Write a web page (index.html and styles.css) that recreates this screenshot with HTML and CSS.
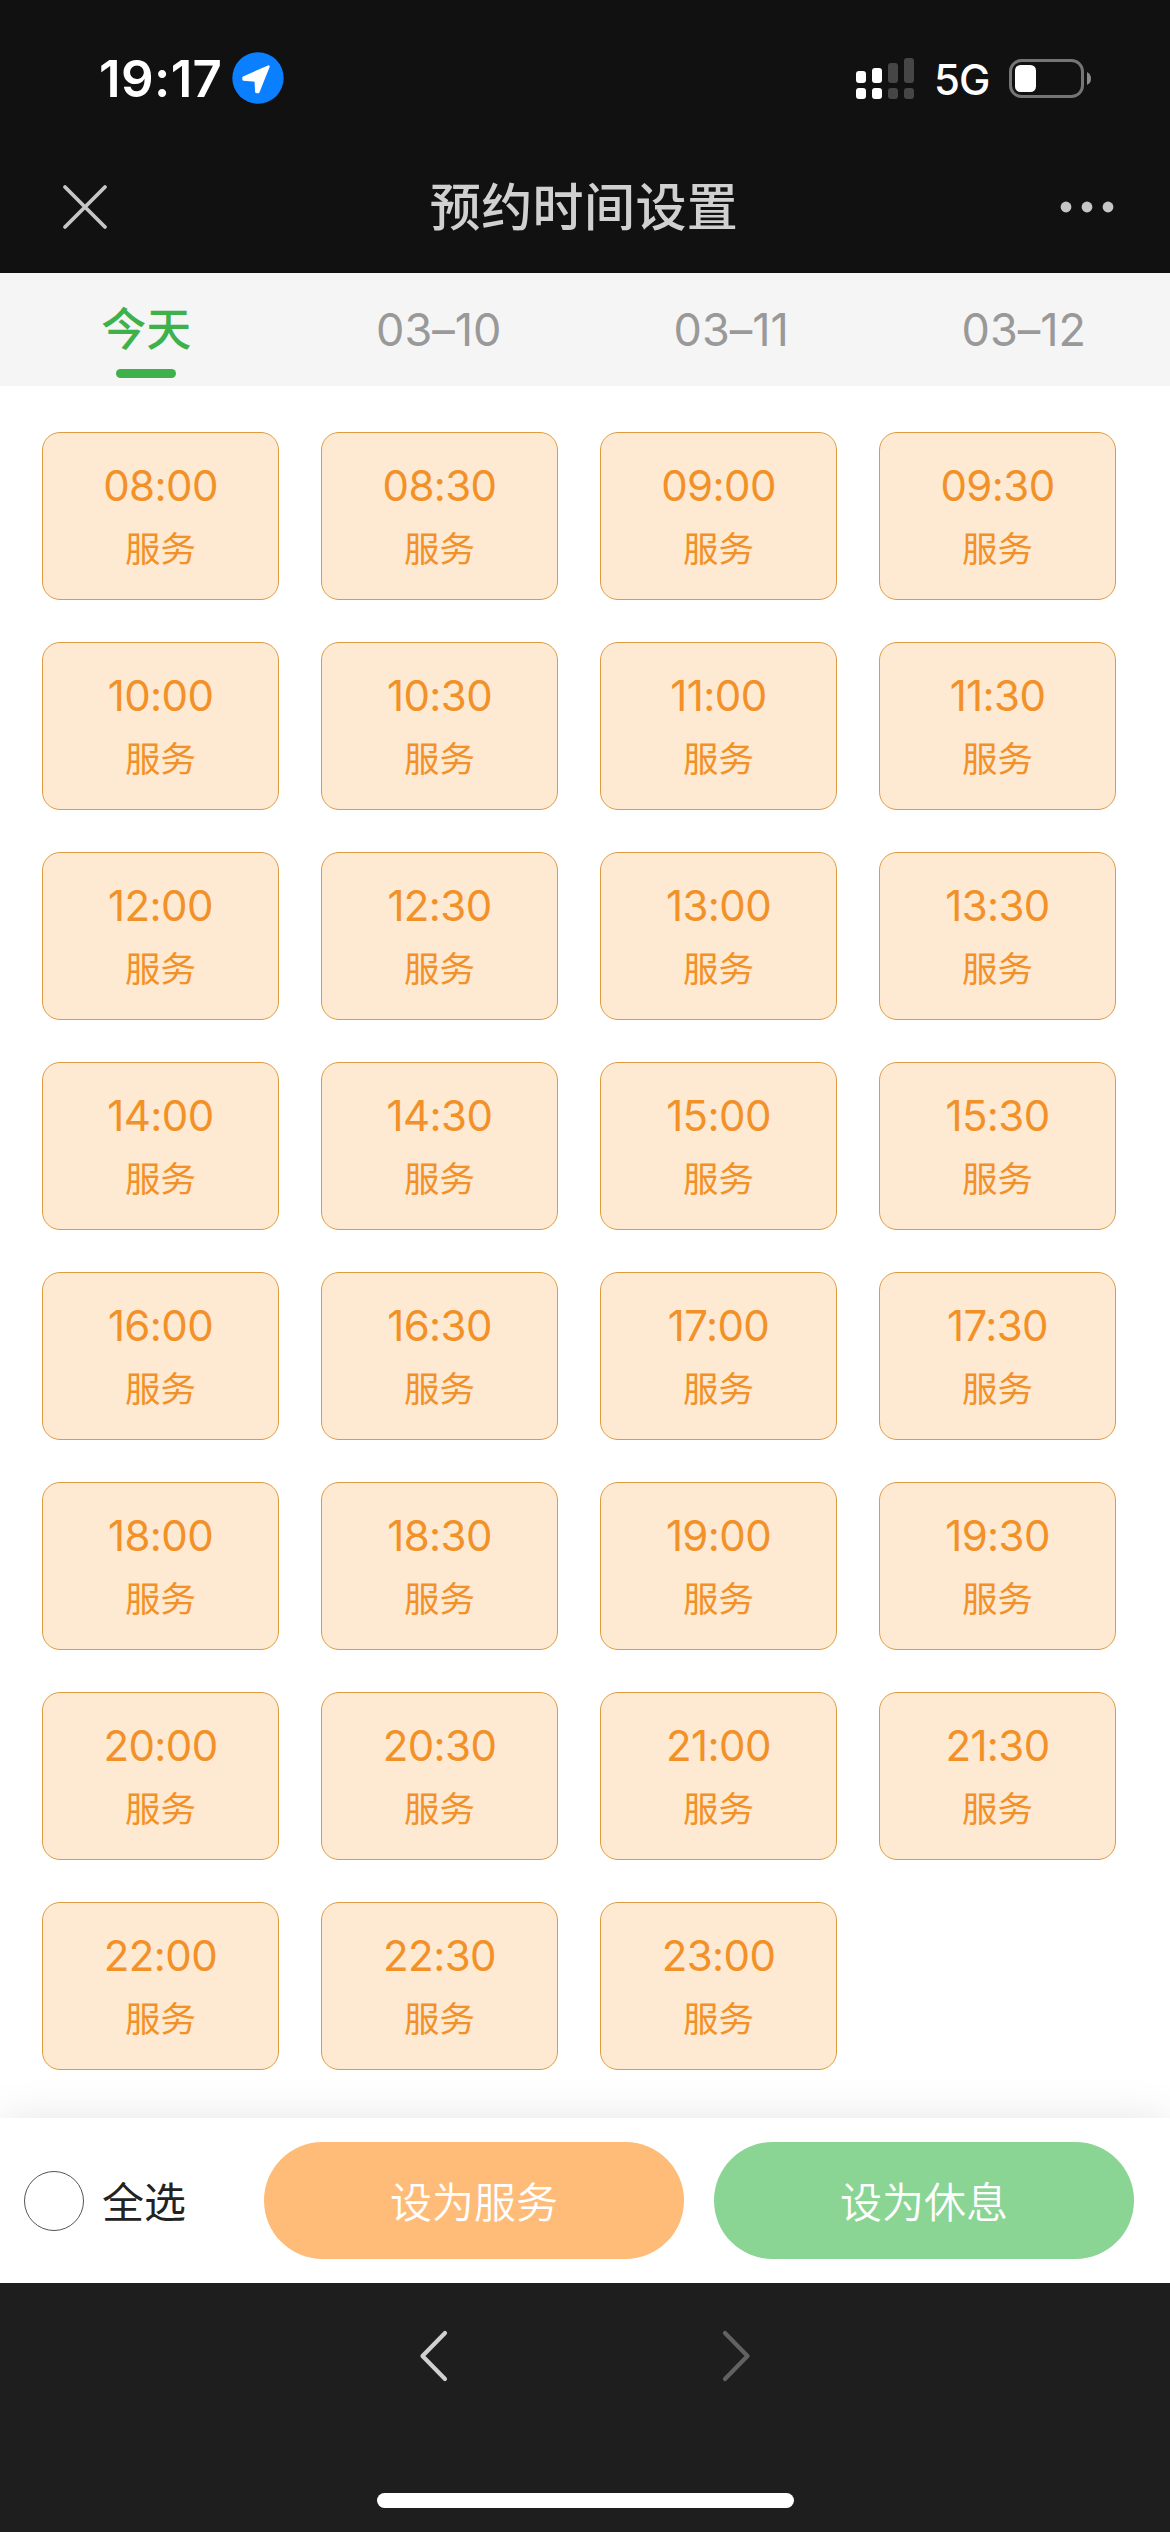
FILE: index.html
```html
<!DOCTYPE html>
<html lang="zh-CN">
<head>
<meta charset="UTF-8" />
<meta name="viewport" content="width=device-width, initial-scale=1" />
<title>预约时间设置</title>
<link rel="stylesheet" href="styles.css">
</head>
<body>

<header class="top">
  <div class="status">
    <span class="clock">19:17</span>
    <svg class="location" width="52" height="52" viewBox="0 0 52 52">
      <circle cx="26" cy="26" r="25.7" fill="#0a7fff"/>
      <path d="M11.5 25.5 L36.5 14.5 L26.3 40 L24.3 40 L23.7 28.5 L11.5 27.5 Z" fill="#fff" stroke="#fff" stroke-width="2.4" stroke-linejoin="round"/>
    </svg>
    <div class="status-right">
      <svg width="58" height="41" viewBox="0 0 58 41">
        <g fill="#fff">
          <rect x="0" y="13" width="10" height="12" rx="3"/>
          <rect x="16" y="10" width="10" height="15" rx="3"/>
          <rect x="0" y="30" width="10" height="11" rx="3"/>
          <rect x="16" y="30" width="10" height="11" rx="3"/>
        </g>
        <g fill="#464646">
          <rect x="32" y="5" width="10" height="20" rx="3"/>
          <rect x="48" y="0" width="10" height="25" rx="3"/>
          <rect x="32" y="30" width="10" height="11" rx="3"/>
          <rect x="48" y="30" width="10" height="11" rx="3"/>
        </g>
      </svg>
      <span class="network">5G</span>
      <svg width="83" height="39" viewBox="0 0 83 39">
        <rect x="1.5" y="1.5" width="72" height="36" rx="11" fill="none" stroke="#757575" stroke-width="3"/>
        <rect x="6" y="6" width="21" height="27" rx="5.5" fill="#fff"/>
        <path d="M78 13 Q82 15 82 19.5 Q82 24 78 26 Z" fill="#8a8a8a"/>
      </svg>
    </div>
  </div>
  <div class="titlebar">
    <svg width="46" height="46" viewBox="0 0 46 46" stroke="#c6c6c6" stroke-width="3.8" stroke-linecap="round">
      <path d="M3 3 L43 43 M43 3 L3 43"/>
    </svg>
    <h1>预约时间设置</h1>
    <svg width="54" height="12" viewBox="0 0 54 12" fill="#c6c6c6">
      <circle cx="6" cy="6" r="5.4"/>
      <circle cx="27" cy="6" r="5.4"/>
      <circle cx="48" cy="6" r="5.4"/>
    </svg>
  </div>
</header>

<nav class="tabs">
  <div class="tab active">今天</div>
  <div class="tab">03–10</div>
  <div class="tab">03–11</div>
  <div class="tab">03–12</div>
</nav>

<main class="slots" id="slots"></main>

<div class="actions">
  <span class="check"></span>
  <span class="check-label">全选</span>
  <button class="btn btn-serve">设为服务</button>
  <button class="btn btn-rest">设为休息</button>
</div>

<footer class="browser">
  <div class="arrows">
    <svg width="30" height="54" viewBox="0 0 30 54" fill="none" stroke="#d0d0d0" stroke-width="4.2" stroke-linecap="round" stroke-linejoin="round">
      <path d="M26 4 L3.5 27 L26 50"/>
    </svg>
    <svg width="30" height="54" viewBox="0 0 30 54" fill="none" stroke="#626262" stroke-width="4.2" stroke-linecap="round" stroke-linejoin="round">
      <path d="M4 4 L26.5 27 L4 50"/>
    </svg>
  </div>
  <div class="home-bar"></div>
</footer>

<script>
  const slots = document.getElementById('slots');

  // half hour steps from 08:00 to 23:00
  for (let m = 8 * 60; m <= 23 * 60; m += 30) {
    const hh = String(Math.floor(m / 60)).padStart(2, '0');
    const mm = String(m % 60).padStart(2, '0');
    const slot = document.createElement('div');
    slot.className = 'slot';
    slot.innerHTML = `<span class="time">${hh}:${mm}</span><span class="state">服务</span>`;
    slots.appendChild(slot);
  }
</script>

</body>
</html>
```

FILE: styles.css
```css
* {
  box-sizing: border-box;
}
body {
  margin: 0;
  height: 2532px;
  display: flex;
  flex-direction: column;
  background: #fff;
  font-family: Inter, "Noto Sans CJK SC", sans-serif;
}
svg {
  display: block;
  flex: none;
}
.top {
  height: 273px;
  background: #111;
}
.status {
  height: 141px;
  padding: 15px 78px 0 99px;
  display: flex;
  align-items: center;
  color: #fff;
}
.clock {
  width: 133px;
  font-size: 51px;
  font-weight: 600;
  letter-spacing: 0.4px;
}
.status-right {
  margin-left: auto;
  display: flex;
  align-items: center;
}
.network {
  width: 75px;
  margin: 2px 0 0 20px;
  font-size: 42px;
  font-weight: 500;
  letter-spacing: -1px;
}
.titlebar {
  height: 132px;
  padding: 0 56px 0 62px;
  display: flex;
  align-items: center;
  justify-content: space-between;
}
h1 {
  margin: 2px 0 0;
  font-size: 51px;
  font-weight: 500;
  line-height: 70px;
  letter-spacing: 0.4px;
  color: #d0d0d0;
}
.tabs {
  height: 113px;
  display: grid;
  grid-template-columns: repeat(4, 1fr);
  background: #f5f5f5;
}
.tab {
  display: flex;
  flex-direction: column;
  align-items: center;
  padding-top: 27px;
  font-size: 45px;
  line-height: 60px;
  font-weight: 400;
  font-feature-settings: "calt" 0;
  color: #999;
}
.tab.active {
  font-weight: 500;
  color: #3eb14b;
}
.tab.active::after {
  content: "";
  width: 60px;
  height: 9px;
  margin-top: 9px;
  border-radius: 5px;
  background: #3eb14b;
}
.slots {
  height: 1732px;
  padding: 46px 54px 0 42px;
  display: grid;
  grid-template-columns: repeat(4, 237px);
  grid-auto-rows: 168px;
  align-content: start;
  gap: 42px;
}
.slot {
  display: flex;
  flex-direction: column;
  align-items: center;
  padding-top: 28px;
  border: 1px solid #dd9c42;
  border-radius: 18px;
  background: #fee9d2;
  color: #f29128;
}
.time {
  font-size: 42px;
  line-height: 50px;
  letter-spacing: -0.6px;
  font-feature-settings: "calt" 0;
}
.state {
  margin-top: 14px;
  font-size: 35.5px;
  line-height: 50px;
}
.actions {
  position: relative;
  height: 165px;
  padding: 0 36px 0 24px;
  display: flex;
  align-items: center;
  background: #fff;
  box-shadow: 0 0 40px rgba(0, 0, 0, 0.1);
}
.check {
  width: 60px;
  height: 60px;
  border: 1px solid #555;
  border-radius: 50%;
}
.check-label {
  width: 161px;
  padding: 0 0 3px 18px;
  font-size: 42px;
  color: #222;
}
.btn {
  width: 420px;
  height: 117px;
  margin-left: 30px;
  padding: 0 0 3px;
  border: none;
  border-radius: 59px;
  font-family: inherit;
  font-size: 42px;
  font-weight: 350;
  color: #fff;
}
.btn-serve {
  margin-left: 19px;
  background: #ffbc78;
}
.btn-rest {
  background: #8ad594;
}
.browser {
  position: relative;
  height: 249px;
  padding-top: 46px;
  display: flex;
  flex-direction: column;
  align-items: center;
  background: #1e1e1e;
}
.arrows {
  width: 332px;
  display: flex;
  justify-content: space-between;
}
.home-bar {
  width: 417px;
  height: 15px;
  margin-top: 110px;
  border-radius: 8px;
  background: #fff;
}
```
